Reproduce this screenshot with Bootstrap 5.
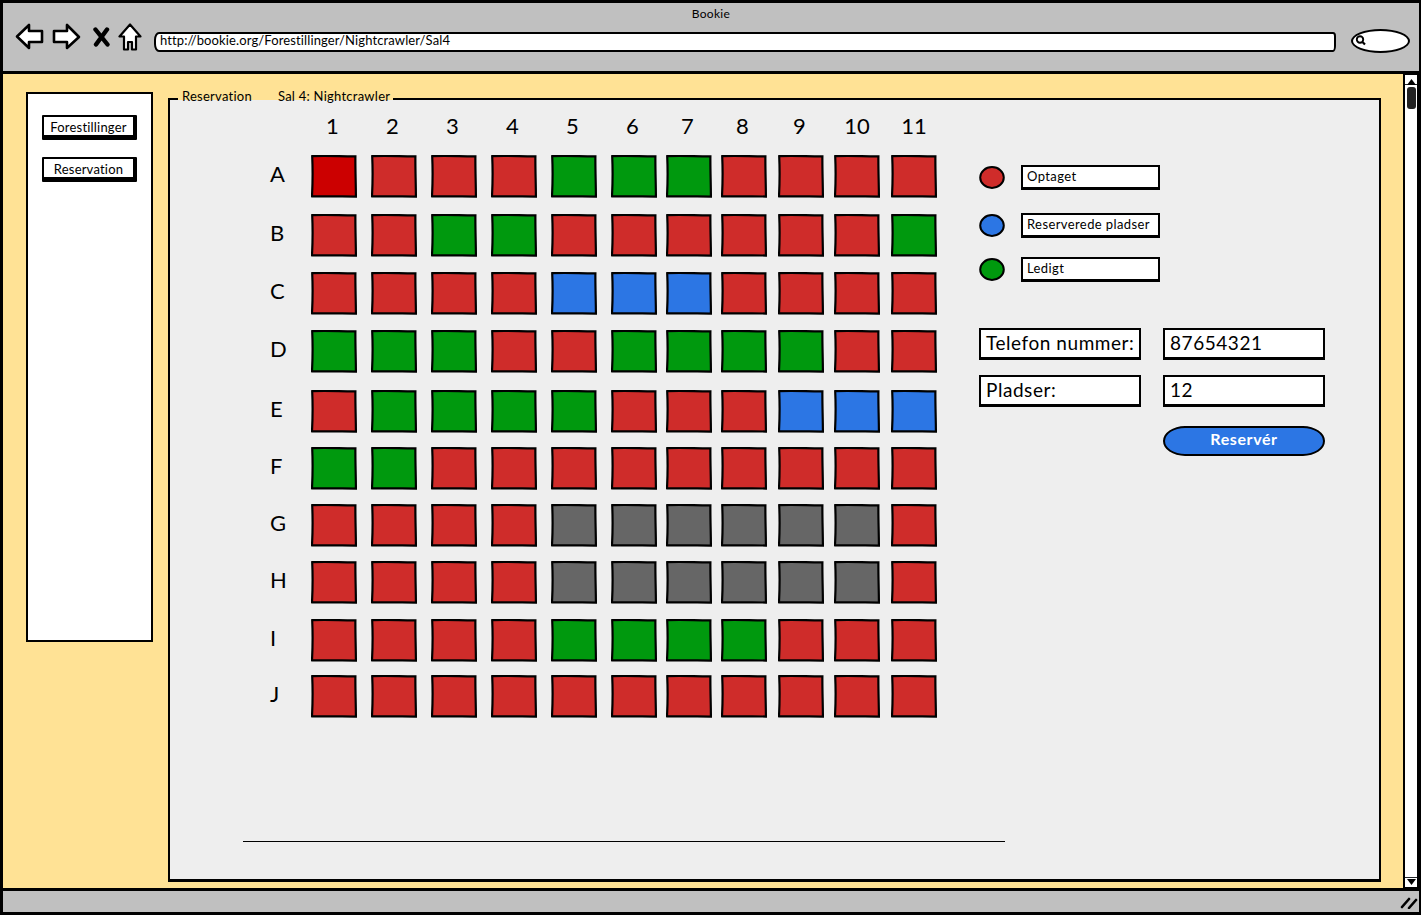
<!DOCTYPE html>
<html lang="da">
<head>
<meta charset="utf-8">
<title>Bookie</title>
<link href="https://cdn.jsdelivr.net/npm/bootstrap@5.3.0/dist/css/bootstrap.min.css" rel="stylesheet">
<style>
html,body{margin:0;background:#fff;}
body{width:1423px;height:917px;overflow:hidden;font-family:"Lato","Liberation Sans",sans-serif;color:#000;}
.wk-window{width:1421px;height:915px;border:3px solid #000;border-right-width:2px;background:#ffe295;}
.wk-top{height:71px;background:#c0c0c0;border-bottom:3px solid #000;flex:none;}
.wk-title{font-size:12px;line-height:14px;text-align:center;padding-top:4px;height:20px;letter-spacing:.3px;}
.wk-tools{height:30px;padding-left:12px;}
.wk-url{width:1182px;height:20px;margin-left:12px;background:#fff;border:2px solid #000;border-radius:5px 3px 3px 5px/8px 4px 6px 8px;font-size:13px;line-height:13px;padding-left:4px;letter-spacing:.12px;margin-top:9px;}
.wk-search{width:59px;height:24px;margin-left:15px;margin-top:6px;background:#fff;border:2px solid #000;border-radius:50%/50%;flex:none;padding:4px 0 0 2px;line-height:0;}
.wk-main{min-height:0;}
.wk-side{width:127px;height:550px;margin:18px 15px 0 23px;background:#fff;border:2px solid #000;padding:21px 0 0 14px;flex:none;}
.wk-navbtn{width:95px;height:25px;background:#fff;border:2px solid #000;border-right-width:4px;border-bottom-width:5px;font-size:13px;line-height:20px;text-align:center;letter-spacing:.2px;margin-bottom:17px;border-radius:1px;white-space:nowrap;}
.wk-panel{width:1213px;height:784px;margin-top:24px;background:#eee;border:2px solid #000;border-bottom-width:3px;position:relative;flex:none;}
.wk-legend{position:absolute;left:8px;top:-12px;height:18px;padding:0 3px 0 4px;gap:26px;font-size:13px;line-height:16px;letter-spacing:.25px;background:linear-gradient(#ffe295 0 12px,#eee 12px);}
.wk-hall{display:grid;grid-template-columns:61px 60px 60px 60px 60px 60px 55px 55px 57px 56px 57px 46px;grid-template-rows:53px 59px 58px 58px 60px 57px 57px 57px 58px 56px 43px;margin:2px 0 0 80px;width:687px;flex:none;}
.wk-colhead{width:46px;text-align:center;font-size:22px;line-height:26px;padding:11px 3px 0 0;}
.wk-colhead-wide{padding-right:0;}
.wk-rowhead{font-size:22px;line-height:26px;height:38px;display:flex;align-items:center;padding-left:20px;}
.wk-seat{width:46px;height:43px;display:block;}
.s-r{color:#cf2c2a}.s-x{color:#cc0000}.s-g{color:#00990e}.s-b{color:#2c76e4}.s-k{color:#666}
.wk-right{width:346px;margin-left:42px;padding-top:65px;}
.wk-dot{width:26px;height:25px;flex:none;}
.wk-key{width:139px;height:25px;margin-left:16px;background:#fff;border:2px solid #000;border-bottom-width:3px;font-size:13px;line-height:18px;padding-left:4px;letter-spacing:.4px;white-space:nowrap;}
.wk-field{width:162px;height:32px;background:#fff;border:2px solid #000;border-bottom-width:3px;font-size:19px;line-height:26px;padding-left:5px;letter-spacing:.55px;white-space:nowrap;}
.wk-go{width:162px;height:30px;margin-left:184px;margin-top:19px;background:#2c76e4;border:2px solid #000;border-radius:22px/50%;color:#fff;font-size:16px;font-weight:700;line-height:22px;text-align:center;letter-spacing:.6px;}
.wk-rule{position:absolute;left:73px;top:741px;width:762px;height:0;border-top:1px solid #000;}
.wk-scroll{width:16px;height:815px;margin-left:22px;margin-top:0;background:#fff;border:2px solid #000;border-top-width:1px;flex:none;}
.wk-scrollbtn{height:10px;line-height:0;text-align:center;flex:none;}
.wk-thumb{width:9px;height:22px;background:#222;border-radius:3px;margin:2px 0 0 2px;}
.wk-status{height:24px;background:#c0c0c0;border-top:3px solid #000;padding:4px 1px 0 0;flex:none;}
</style>
</head>
<body>
<svg width="0" height="0" class="d-block" aria-hidden="true">
<symbol id="seatshape" viewBox="0 0 46 43"><path d="M1.2 1.2 C14 .4 30 1.4 44.4 1.3 C44.2 14 44.9 28 44.9 41.6 C30 40.8 15 41.9 1 41.3 C1.7 28 1.8 14 1.2 1.2Z" fill="currentColor" stroke="#000" stroke-width="2.2"/></symbol>
</svg>
<div class="wk-window d-flex flex-column">
  <div class="wk-top">
    <div class="wk-title">Bookie</div>
    <div class="wk-tools d-flex align-items-start">
      <svg width="29" height="27" viewBox="0 0 29 27" class="flex-none"><path d="M2 13.5 14 2v6h13v11H14v6Z" fill="#fff" stroke="#000" stroke-width="2.6" stroke-linejoin="round"/></svg>
      <svg width="30" height="27" viewBox="0 0 30 27" style="margin-left:7px"><path d="M28 14 16 2v6H3v11h13v6Z" fill="#fff" stroke="#000" stroke-width="2.6" stroke-linejoin="round"/></svg>
      <svg width="17" height="20" viewBox="0 0 17 20" class="mt-1" style="margin-left:12px"><path d="M2.5 2.5 14.5 17.5M14 2.5 3 17.5" fill="none" stroke="#000" stroke-width="4.4" stroke-linecap="round"/></svg>
      <svg width="24" height="28" viewBox="0 0 24 28" style="margin-left:8px"><path d="M12 1.5 1.5 13.5H6V26.5H10V19H14V26.5H18V13.5H22.5Z" fill="#fff" stroke="#000" stroke-width="2.2" stroke-linejoin="round"/></svg>
      <div class="wk-url">http://bookie.org/Forestillinger/Nightcrawler/Sal4</div>
      <div class="wk-search"><svg width="13" height="11" viewBox="0 0 13 11"><circle cx="5" cy="4.5" r="3.2" fill="#fff" stroke="#000" stroke-width="1.9"/><path d="M7.5 7 10 9.5" stroke="#000" stroke-width="2.2"/></svg></div>
    </div>
  </div>
  <div class="wk-main d-flex flex-grow-1">
    <div class="wk-side">
      <div class="wk-navbtn">Forestillinger</div>
      <div class="wk-navbtn">Reservation</div>
    </div>
    <div class="wk-panel d-flex">
      <div class="wk-legend d-flex"><span>Reservation</span><span>Sal 4: Nightcrawler</span></div>
      <div class="wk-hall">
        <span></span><span class="wk-colhead">1</span><span class="wk-colhead">2</span><span class="wk-colhead">3</span><span class="wk-colhead">4</span><span class="wk-colhead">5</span><span class="wk-colhead">6</span><span class="wk-colhead">7</span><span class="wk-colhead">8</span><span class="wk-colhead">9</span><span class="wk-colhead wk-colhead-wide">10</span><span class="wk-colhead wk-colhead-wide">11</span>
        <span class="wk-rowhead">A</span><svg class="wk-seat s-x"><use href="#seatshape"/></svg><svg class="wk-seat s-r"><use href="#seatshape"/></svg><svg class="wk-seat s-r"><use href="#seatshape"/></svg><svg class="wk-seat s-r"><use href="#seatshape"/></svg><svg class="wk-seat s-g"><use href="#seatshape"/></svg><svg class="wk-seat s-g"><use href="#seatshape"/></svg><svg class="wk-seat s-g"><use href="#seatshape"/></svg><svg class="wk-seat s-r"><use href="#seatshape"/></svg><svg class="wk-seat s-r"><use href="#seatshape"/></svg><svg class="wk-seat s-r"><use href="#seatshape"/></svg><svg class="wk-seat s-r"><use href="#seatshape"/></svg>
        <span class="wk-rowhead">B</span><svg class="wk-seat s-r"><use href="#seatshape"/></svg><svg class="wk-seat s-r"><use href="#seatshape"/></svg><svg class="wk-seat s-g"><use href="#seatshape"/></svg><svg class="wk-seat s-g"><use href="#seatshape"/></svg><svg class="wk-seat s-r"><use href="#seatshape"/></svg><svg class="wk-seat s-r"><use href="#seatshape"/></svg><svg class="wk-seat s-r"><use href="#seatshape"/></svg><svg class="wk-seat s-r"><use href="#seatshape"/></svg><svg class="wk-seat s-r"><use href="#seatshape"/></svg><svg class="wk-seat s-r"><use href="#seatshape"/></svg><svg class="wk-seat s-g"><use href="#seatshape"/></svg>
        <span class="wk-rowhead">C</span><svg class="wk-seat s-r"><use href="#seatshape"/></svg><svg class="wk-seat s-r"><use href="#seatshape"/></svg><svg class="wk-seat s-r"><use href="#seatshape"/></svg><svg class="wk-seat s-r"><use href="#seatshape"/></svg><svg class="wk-seat s-b"><use href="#seatshape"/></svg><svg class="wk-seat s-b"><use href="#seatshape"/></svg><svg class="wk-seat s-b"><use href="#seatshape"/></svg><svg class="wk-seat s-r"><use href="#seatshape"/></svg><svg class="wk-seat s-r"><use href="#seatshape"/></svg><svg class="wk-seat s-r"><use href="#seatshape"/></svg><svg class="wk-seat s-r"><use href="#seatshape"/></svg>
        <span class="wk-rowhead">D</span><svg class="wk-seat s-g"><use href="#seatshape"/></svg><svg class="wk-seat s-g"><use href="#seatshape"/></svg><svg class="wk-seat s-g"><use href="#seatshape"/></svg><svg class="wk-seat s-r"><use href="#seatshape"/></svg><svg class="wk-seat s-r"><use href="#seatshape"/></svg><svg class="wk-seat s-g"><use href="#seatshape"/></svg><svg class="wk-seat s-g"><use href="#seatshape"/></svg><svg class="wk-seat s-g"><use href="#seatshape"/></svg><svg class="wk-seat s-g"><use href="#seatshape"/></svg><svg class="wk-seat s-r"><use href="#seatshape"/></svg><svg class="wk-seat s-r"><use href="#seatshape"/></svg>
        <span class="wk-rowhead">E</span><svg class="wk-seat s-r"><use href="#seatshape"/></svg><svg class="wk-seat s-g"><use href="#seatshape"/></svg><svg class="wk-seat s-g"><use href="#seatshape"/></svg><svg class="wk-seat s-g"><use href="#seatshape"/></svg><svg class="wk-seat s-g"><use href="#seatshape"/></svg><svg class="wk-seat s-r"><use href="#seatshape"/></svg><svg class="wk-seat s-r"><use href="#seatshape"/></svg><svg class="wk-seat s-r"><use href="#seatshape"/></svg><svg class="wk-seat s-b"><use href="#seatshape"/></svg><svg class="wk-seat s-b"><use href="#seatshape"/></svg><svg class="wk-seat s-b"><use href="#seatshape"/></svg>
        <span class="wk-rowhead">F</span><svg class="wk-seat s-g"><use href="#seatshape"/></svg><svg class="wk-seat s-g"><use href="#seatshape"/></svg><svg class="wk-seat s-r"><use href="#seatshape"/></svg><svg class="wk-seat s-r"><use href="#seatshape"/></svg><svg class="wk-seat s-r"><use href="#seatshape"/></svg><svg class="wk-seat s-r"><use href="#seatshape"/></svg><svg class="wk-seat s-r"><use href="#seatshape"/></svg><svg class="wk-seat s-r"><use href="#seatshape"/></svg><svg class="wk-seat s-r"><use href="#seatshape"/></svg><svg class="wk-seat s-r"><use href="#seatshape"/></svg><svg class="wk-seat s-r"><use href="#seatshape"/></svg>
        <span class="wk-rowhead">G</span><svg class="wk-seat s-r"><use href="#seatshape"/></svg><svg class="wk-seat s-r"><use href="#seatshape"/></svg><svg class="wk-seat s-r"><use href="#seatshape"/></svg><svg class="wk-seat s-r"><use href="#seatshape"/></svg><svg class="wk-seat s-k"><use href="#seatshape"/></svg><svg class="wk-seat s-k"><use href="#seatshape"/></svg><svg class="wk-seat s-k"><use href="#seatshape"/></svg><svg class="wk-seat s-k"><use href="#seatshape"/></svg><svg class="wk-seat s-k"><use href="#seatshape"/></svg><svg class="wk-seat s-k"><use href="#seatshape"/></svg><svg class="wk-seat s-r"><use href="#seatshape"/></svg>
        <span class="wk-rowhead">H</span><svg class="wk-seat s-r"><use href="#seatshape"/></svg><svg class="wk-seat s-r"><use href="#seatshape"/></svg><svg class="wk-seat s-r"><use href="#seatshape"/></svg><svg class="wk-seat s-r"><use href="#seatshape"/></svg><svg class="wk-seat s-k"><use href="#seatshape"/></svg><svg class="wk-seat s-k"><use href="#seatshape"/></svg><svg class="wk-seat s-k"><use href="#seatshape"/></svg><svg class="wk-seat s-k"><use href="#seatshape"/></svg><svg class="wk-seat s-k"><use href="#seatshape"/></svg><svg class="wk-seat s-k"><use href="#seatshape"/></svg><svg class="wk-seat s-r"><use href="#seatshape"/></svg>
        <span class="wk-rowhead">I</span><svg class="wk-seat s-r"><use href="#seatshape"/></svg><svg class="wk-seat s-r"><use href="#seatshape"/></svg><svg class="wk-seat s-r"><use href="#seatshape"/></svg><svg class="wk-seat s-r"><use href="#seatshape"/></svg><svg class="wk-seat s-g"><use href="#seatshape"/></svg><svg class="wk-seat s-g"><use href="#seatshape"/></svg><svg class="wk-seat s-g"><use href="#seatshape"/></svg><svg class="wk-seat s-g"><use href="#seatshape"/></svg><svg class="wk-seat s-r"><use href="#seatshape"/></svg><svg class="wk-seat s-r"><use href="#seatshape"/></svg><svg class="wk-seat s-r"><use href="#seatshape"/></svg>
        <span class="wk-rowhead">J</span><svg class="wk-seat s-r"><use href="#seatshape"/></svg><svg class="wk-seat s-r"><use href="#seatshape"/></svg><svg class="wk-seat s-r"><use href="#seatshape"/></svg><svg class="wk-seat s-r"><use href="#seatshape"/></svg><svg class="wk-seat s-r"><use href="#seatshape"/></svg><svg class="wk-seat s-r"><use href="#seatshape"/></svg><svg class="wk-seat s-r"><use href="#seatshape"/></svg><svg class="wk-seat s-r"><use href="#seatshape"/></svg><svg class="wk-seat s-r"><use href="#seatshape"/></svg><svg class="wk-seat s-r"><use href="#seatshape"/></svg><svg class="wk-seat s-r"><use href="#seatshape"/></svg>
      </div>
      <div class="wk-right">
        <div class="d-flex" style="margin-bottom:23px"><svg class="wk-dot s-r"><ellipse cx="13" cy="12.5" rx="11.8" ry="10.4" fill="currentColor" stroke="#000" stroke-width="2"/></svg><div class="wk-key">Optaget</div></div>
        <div class="d-flex" style="margin-bottom:19px"><svg class="wk-dot s-b"><ellipse cx="13" cy="12.5" rx="11.8" ry="10.4" fill="currentColor" stroke="#000" stroke-width="2"/></svg><div class="wk-key">Reserverede pladser</div></div>
        <div class="d-flex" style="margin-bottom:46px"><svg class="wk-dot s-g"><ellipse cx="13" cy="12.5" rx="11.8" ry="10.4" fill="currentColor" stroke="#000" stroke-width="2"/></svg><div class="wk-key">Ledigt</div></div>
        <div class="d-flex" style="gap:22px;margin-bottom:15px"><div class="wk-field">Telefon nummer:</div><div class="wk-field">87654321</div></div>
        <div class="d-flex" style="gap:22px"><div class="wk-field">Pladser:</div><div class="wk-field">12</div></div>
        <div class="wk-go">Reservér</div>
      </div>
      <div class="wk-rule"></div>
    </div>
    <div class="wk-scroll d-flex flex-column">
      <div class="wk-scrollbtn border-bottom border-dark"><svg width="9" height="7" viewBox="0 0 9 7" class="mt-1"><path d="M4.5 0 9 6H0Z" fill="#000"/></svg></div>
      <div class="wk-thumb"></div>
      <div class="flex-grow-1"></div>
      <div class="wk-scrollbtn border-top border-dark"><svg width="9" height="7" viewBox="0 0 9 7"><path d="M4.5 7 9 1H0Z" fill="#000"/></svg></div>
    </div>
  </div>
  <div class="wk-status d-flex justify-content-end">
    <svg width="18" height="14" viewBox="0 0 18 14"><path d="M2 12 9 4M9 13 16 5" stroke="#000" stroke-width="2.6" stroke-linecap="round"/></svg>
  </div>
</div>
</body>
</html>
